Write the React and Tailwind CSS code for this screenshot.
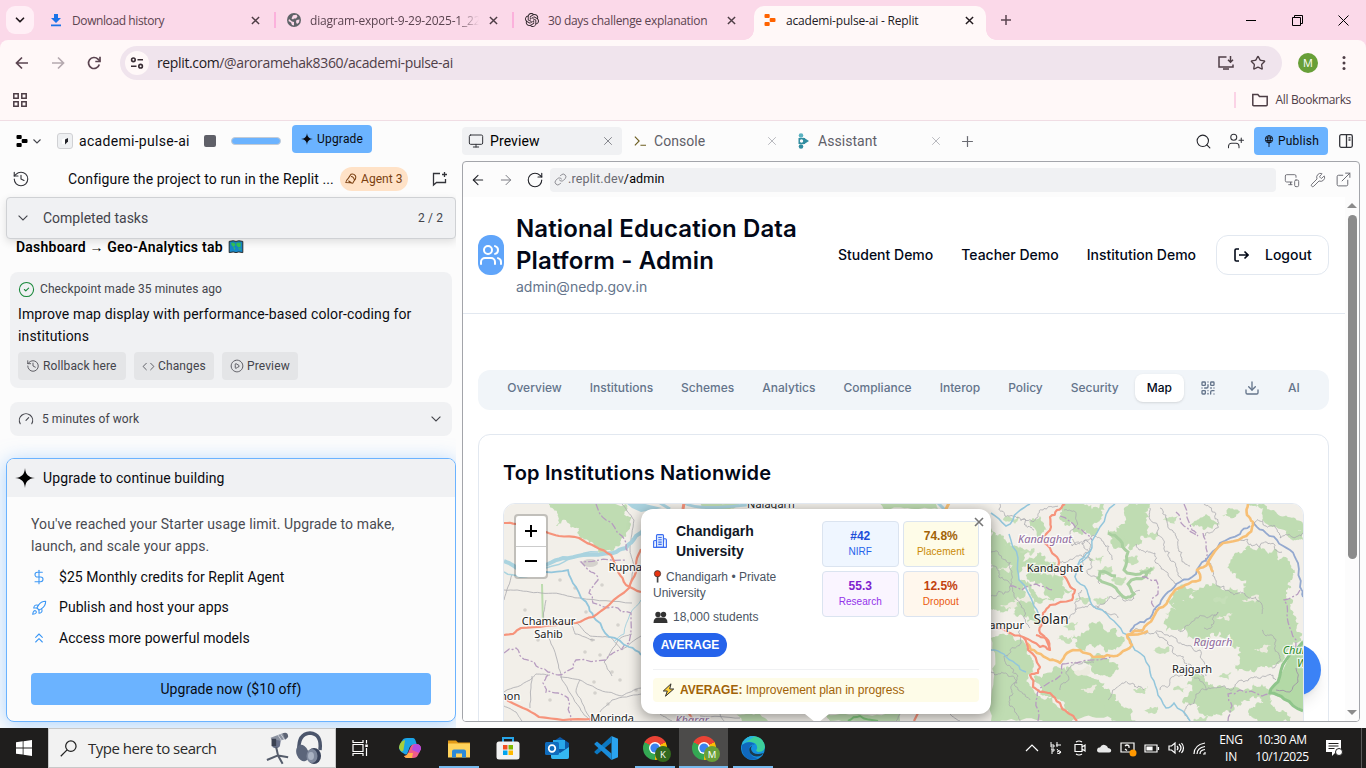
import React from "react";
import {
  ArrowLeft, ArrowRight, RotateCw, ChevronDown, History, Monitor, X, Plus, Search, UserPlus, Wrench,
  ExternalLink, Link, Users, QrCode, Download, DollarSign, Rocket, ChevronsUp,
  Code, CirclePlay, CircleCheck, Gauge, Star, MonitorSmartphone,
} from "lucide-react";
import { SiOpenai } from "react-icons/si";

/* ---------- map helpers ---------- */
function seeded(seed) {
  let s = seed * 9301 + 49297;
  return () => {
    s = (s * 1103515245 + 12345) % 2147483648;
    return s / 2147483648 - 0.5;
  };
}
function rough(pts, amp, depth, seed, close) {
  const rnd = seeded(seed);
  let p = close ? [...pts, pts[0]] : pts;
  for (let d = 0; d < depth; d++) {
    const next = [p[0]];
    for (let i = 1; i < p.length; i++) {
      const [ax, ay] = p[i - 1];
      const [bx, by] = p[i];
      const len = Math.hypot(bx - ax, by - ay) || 1;
      const off = rnd() * amp * Math.min(1, len / 9);
      next.push([(ax + bx) / 2 - ((by - ay) / len) * off, (ay + by) / 2 + ((bx - ax) / len) * off], p[i]);
    }
    p = next;
    amp *= 0.8;
  }
  return "M" + p.map(([x, y]) => x.toFixed(1) + " " + y.toFixed(1)).join("L") + (close ? "Z" : "");
}
const parse = (s) => s.split(" ").map((q) => q.split(",").map(Number));

const forests = [
  ["549,504 626,504 631,517 626,537 613,551 606,553 593,543 579,536 579,528 566,520 556,526 558,514", 9],
  ["991,528 1004,536 1016,546 1024,556 1018,575 1026,592 1036,608 1042,620 1028,616 1014,608 1004,612 991,606", 14],
  ["991,638 1010,634 1024,642 1034,664 1028,676 1036,694 1052,698 1072,721 991,721", 8],
  ["1022,560 1040,552 1056,562 1058,576 1072,590 1060,598 1044,586 1030,582", 12],
  ["1040,604 1030,596 1020,580 1034,590 1052,600", 8],
  ["1034,676 1060,668 1072,666 1088,676 1104,690 1118,706 1130,721 1070,721 1054,698 1040,692", 10],
  ["1062,512 1080,504 1104,504 1100,520 1092,536 1078,532 1070,522", 14],
  ["1040,516 1048,530 1040,540 1030,526", 8],
  ["1108,530 1122,526 1134,540 1120,548 1110,542", 10],
  ["1124,508 1150,504 1146,522 1140,538 1128,548 1120,530", 12],
  ["1074,634 1092,622 1116,628 1124,642 1112,650 1092,646 1078,648", 12],
  ["1084,660 1104,656 1118,664 1112,676 1098,674", 10],
  ["1098,684 1110,690 1124,708 1136,721 1112,721 1102,704", 10],
  ["1242,553 1260,547 1274,549 1290,564 1293,577 1286,590 1290,604 1296,630 1293,650 1277,664 1260,667 1234,664 1240,647 1230,634 1210,634 1206,644 1186,630 1164,624 1164,614 1176,610 1174,600 1194,597 1216,585 1240,597 1246,596 1240,580 1230,570", 14],
  ["1180,586 1196,590 1188,602 1172,606 1166,600", 8],
  ["1190,676 1204,678 1216,688 1250,690 1262,684 1276,692 1262,702 1244,700 1226,710 1206,716 1196,704 1184,704", 12],
  ["1190,524 1206,514 1220,524 1204,530", 8],
  ["1246,504 1264,508 1262,520 1290,530 1303,532 1303,524 1276,512 1260,504", 7],
  ["1228,508 1240,512 1234,518 1222,516", 6],
  ["1286,524 1303,530 1303,540 1290,538", 5],
  ["1256,704 1272,700 1280,712 1290,721 1258,721 1248,712", 10],
  ["700,503 745,503 730,509 706,509", 4],
  ["880,503 936,503 938,509 884,509", 4],
  ["826,714 900,714 900,721 830,721", 4],
  ["736,714 760,714 768,721 742,721", 3],
];
const redRoads = [
  ["504,523 516,524 546,532 559,536 579,538 596,547 611,555 618,572 626,585 641,592", 1.5],
  ["504,635 513,634 521,628 546,626 576,623 593,617 609,605 629,588 636,572 637,558 641,549", 1.5],
  ["504,698 523,708 539,717 563,720 593,719", 1],
  ["688,712 694,721", 0],
  ["914,721 918,713", 0],
  ["1065,504 1057,510 1050,517 1051,527 1043,538 1050,548 1057,557 1058,570 1068,582 1075,590 1072,600 1050,605 1043,613 1042,623 1040,633 1050,650 1040,647 1023,637 1007,632 992,625", 4],
  ["1036,635 1046,638 1050,650", 3],
  ["1023,637 1028,650 1040,667 1038,673 1030,675 1033,687 1040,692 1050,693 1060,703 1068,713 1077,721", 4],
];
const yellowRoads = [
  "1027,643 1037,653 1050,660 1060,663 1067,653 1080,650 1093,657 1107,655 1120,654 1132,645 1127,635 1143,630 1153,618 1163,607 1173,593 1185,585 1200,580 1197,570 1208,562 1223,543 1243,537 1252,528 1253,522 1247,515 1248,504",
  "1208,562 1213,572", "1127,635 1148,631",
];
const rivers = [
  ["1115,504 1100,527 1092,547 1080,560 1075,577 1087,590 1092,605 1110,618 1123,633 1132,645 1140,653 1150,672 1157,690 1166,708 1174,703 1190,721", 1.3],
  ["1130,632 1137,624 1150,618 1160,604 1168,592 1180,582 1196,574 1206,560 1220,543 1240,534 1250,526", 1.6],
  ["1253,522 1263,530 1277,540 1290,550 1298,563 1300,587 1303,597", 1.6],
  ["991,513 1006,526 1018,512 1030,504", 1.4],
  ["1009,534 1018,558 1019,580 1034,606 1043,620", 1.3],
  ["991,650 1004,654 1016,664 1026,672", 1.3],
  ["546,572 568,570 576,587 589,607 596,620 609,637 629,647 641,655", 1.6],
  ["1075,577 1084,560 1092,548", 1],
];
const borders = [
  "504,653 516,648 521,657 534,662 548,672 559,675 573,668 576,660 606,660 613,653 629,643 631,613 613,607 593,603 589,593 598,580 591,572 581,562 626,560",
  "548,675 543,683 546,692 558,693 568,698 571,721",
  "596,504 606,520 622,536 628,552",
  "1062,664 1080,662 1100,660 1112,655", "1038,721 1036,700 1040,688 1060,676 1062,664",
  "1010,586 1022,590 1036,584 1054,590", "1184,504 1192,530 1198,536 1184,526 1176,512",
  "1203,533 1206,548 1206,562", "1142,577 1156,580 1158,594 1152,600 1156,610",
  "1060,516 1076,528 1092,540", "1228,721 1232,706 1228,694 1240,690 1262,696 1276,688",
  "1300,590 1284,600 1288,622 1296,640 1296,668 1290,682",
];
const greyRoads = [
  "504,590 530,592 560,594 580,598 632,603", "546,632 556,656 562,680 580,708 590,721",
  "504,692 530,680 536,674 550,675", "560,677 580,680 600,690 622,696 641,688", "532,676 530,708", "504,706 516,712 522,721",
  "576,622 590,636 610,637 622,650 641,636", "612,676 604,662 618,640 632,634", "622,504 634,520 630,548 634,566 630,588",
  "569,621 575,634 595,640", "600,712 612,700 641,694", "546,600 543,626", "504,600 512,574", "580,680 576,692 592,721",
  "991,552 1006,560 1012,576 1008,592 991,596", "1000,504 1010,516 1026,520 1034,530", "991,566 1004,580 1020,604 1030,628",
  "1020,520 1036,518 1042,510 1058,506", "1060,540 1072,546 1086,540 1090,552 1080,570", "1060,562 1078,556 1090,560 1088,574 1100,584",
  "1020,630 1014,648 1004,656 1018,676 1010,700 1020,721", "1076,610 1090,604 1104,612 1118,618", "1150,508 1158,530 1164,548 1170,560 1184,580",
  "1160,508 1172,530 1178,548 1190,566", "1136,544 1150,552 1160,566 1176,584", "1208,562 1216,584 1230,592 1246,596 1262,604 1262,614",
  "1156,632 1166,640 1174,654 1184,660 1192,668 1204,676", "1130,630 1150,634 1176,638 1200,650 1206,676", "1178,630 1190,624 1204,616 1218,612 1214,622 1204,628",
  "1194,678 1206,690 1230,690 1244,682 1258,678 1276,680", "1160,690 1170,682 1178,676 1186,664", "1254,523 1270,526 1280,538 1303,533",
  "1108,700 1116,688 1130,684 1144,690", "1060,690 1066,672 1080,664 1094,662", "1082,590 1076,606 1062,618", "1092,605 1104,604 1118,596 1130,600 1140,590",
  "1204,504 1216,514 1214,530 1204,536", "1092,560 1084,548 1092,536 1104,544 1112,560", "1064,510 1076,516 1070,532 1080,544",
  "1030,700 1018,690 1008,676 991,672", "1190,721 1186,708 1196,694 1206,690", "1262,630 1276,640 1280,656 1272,668", "1240,540 1252,546 1266,542 1282,552",
  "660,714 672,721", "720,714 724,721", "900,714 896,721", "950,714 960,721", "700,716 740,718",
];

function MapLabel({ x, y, size = 11, children, kind }) {
  const tone = kind === "region" ? "fill-[#8f6a9c] italic" : kind === "park" ? "fill-[#2b8a2b] italic" : "fill-[#222]";
  return (
    <text x={x} y={y} fontSize={size} textAnchor="middle" stroke="#fff" strokeOpacity="0.75" strokeWidth="2.5" paintOrder="stroke"
      className={"font-['Noto_Sans',sans-serif] " + tone}>{children}</text>
  );
}

function MapCanvas() {
  return (
    <svg viewBox="504 504 799 258" className="block h-[258px] w-[799px]">
      <rect x="503" y="503" width="801" height="260" fill="#f2efe9" />
      {forests.map(([s, a], i) => (
        <path key={i} d={rough(parse(s), a, 4, i + 3, true)} fill="#bfdcb2" />
      ))}
      {[[1010, 520], [1026, 552], [1064, 640], [1100, 600], [1146, 570], [1160, 650], [1140, 690], [1220, 600], [1200, 720], [1180, 690], [1224, 676], [1118, 580], [1082, 600], [1150, 536], [1070, 626], [1096, 560], [1130, 560], [1104, 570], [1170, 520], [1150, 710]].map(([x, y], i) => (
        <path key={i} d={rough([[x - 7, y], [x, y - 3], [x + 8, y - 4], [x + 5, y + 4]], 7, 3, i + 60, true)} fill="#c5dfb8" />
      ))}
      {[[1004, 570], [1022, 600], [1008, 606], [1048, 575], [1088, 690], [1250, 600], [1224, 618], [1262, 650], [1082, 672]].map(([x, y], i) => (
        <path key={i} d={rough([[x - 8, y], [x, y - 2], [x + 9, y - 5], [x + 5, y + 3]], 7, 3, i + 90, true)} fill="#eceadf" />
      ))}
      {[[590, 563], [560, 580], [575, 588], [538, 640], [602, 585], [586, 612], [592, 640], [585, 652], [600, 655], [594, 682], [612, 672], [620, 680], [595, 693], [608, 704], [550, 700], [525, 610], [618, 625], [636, 690]].map(([x, y], i) => (
        <ellipse key={i} cx={x} cy={y} rx={i === 0 ? 8 : 1.8} ry={i === 0 ? 4 : 1.8} fill="#d5d2cd" />
      ))}
      <path d="M542 584L543 625" stroke="#bcdcae" strokeWidth="2" />
      {greyRoads.map((s, i) => (
        <path key={i} d={rough(parse(s), parse(s)[0][0] > 980 ? 8 : 2, parse(s)[0][0] > 980 ? 4 : 3, i + 20)} fill="none" stroke="#aaa9ae" strokeWidth="0.8" />
      ))}
      <path d={rough(parse("1108,533 1120,540 1128,552 1124,570 1140,574 1152,568 1146,576 1128,584 1134,594 1126,598 1116,588 1098,578 1100,572 1116,576"), 4, 2, 7)} fill="none" stroke="#a9cfa0" strokeWidth="3" />
      <path d="M626 503L641 503L662 508L641 512L632 508Z" fill="#aad3df" />
      <path d={rough(parse("504,561 514,566 526,573 548,564 563,558 583,555 613,553 626,548 636,536 643,530"), 2, 2, 5)} fill="none" stroke="#aad3df" strokeWidth="4" />
      <path d={rough(parse("504,572 520,577 546,568 570,558 598,552"), 4, 2, 8)} fill="none" stroke="#aad3df" strokeWidth="1.5" />
      <path d={rough(parse("641,600 630,614 624,634 614,642"), 2, 2, 8)} fill="none" stroke="#aad3df" strokeWidth="1" />
      <path d="M684 503Q700 512 760 503M660 503l10 6M938 503l8 8" fill="none" stroke="#aad3df" strokeWidth="3" />
      {borders.map((s, i) => (
        <path key={i} d={rough(parse(s), 4, 2, i + 40)} fill="none" stroke="#b79cc0" strokeWidth="1.3" strokeDasharray="7 2 2 2" />
      ))}
      {rivers.map(([s, w], i) => (
        <path key={i} d={rough(parse(s), 4, 2, i + 11)} fill="none" stroke={w === 1.6 && i !== 6 ? "#94a9cf" : "#93c6dc"} strokeWidth={w + 0.2} />
      ))}
      <path d="M1303 640L1290 655L1277 683L1270 693L1283 699L1303 710Z" fill="#b3d9a6" />
      <path d={rough(parse("1303,642 1286,660 1278,682 1270,693 1284,699 1303,711"), 3, 2, 8)} fill="none" stroke="#8fc58b" strokeWidth="3" />
      <path d={rough(parse("1296,668 1298,682 1290,692 1276,690"), 3, 2, 9)} fill="none" stroke="#a29aa8" strokeWidth="1" />
      <path d={rough(parse("848,721 860,716 878,721"), 3, 2, 9)} fill="none" stroke="#7fc47b" strokeWidth="2" />
      {yellowRoads.map((s, i) => (
        <path key={i} d={rough(parse(s), 4, 2, i + 31)} fill="none" stroke="#f7bf75" strokeWidth="2.6" strokeLinejoin="round" />
      ))}
      {redRoads.map(([s, a], i) => (
        <path key={i} d={rough(parse(s), a, 2, i + 51)} fill="none" stroke="#f6937b" strokeWidth="2.2" strokeLinejoin="round" />
      ))}
      <path d="M949 503l-4 8" stroke="#f7bf75" strokeWidth="3" />
      <path d="M684 503l-1 6" stroke="#f6937b" strokeWidth="3" />
      <MapLabel x={771} y={508}>Nalagarh</MapLabel>
      <MapLabel x={634} y={570.5}>Rupnagar</MapLabel>
      <MapLabel x={548.5} y={625}>Chamkaur</MapLabel>
      <MapLabel x={548.5} y={638}>Sahib</MapLabel>
      <MapLabel x={507} y={700}>anon</MapLabel>
      <MapLabel x={612} y={721.5}>Morinda</MapLabel>
      <MapLabel x={692} y={724} kind="region">Kharar</MapLabel>
      <MapLabel x={1045} y={542.5} kind="region">Kandaghat</MapLabel>
      <MapLabel x={1055} y={572}>Kandaghat</MapLabel>
      <MapLabel x={1051} y={623.5} size={13.5}>Solan</MapLabel>
      <MapLabel x={994} y={629}>Dharampur</MapLabel>
      <MapLabel x={1213} y={646} kind="region">Rajgarh</MapLabel>
      <MapLabel x={1192} y={673}>Rajgarh</MapLabel>
      <MapLabel x={1306} y={654} kind="park">Churdhar</MapLabel>
      <MapLabel x={1315} y={667} kind="park">Wildlife</MapLabel>
    </svg>
  );
}

/* ---------- small drawings ---------- */
function Close({ className }) {
  return <svg viewBox="0 0 10 10" className={"h-[9px] w-[9px] shrink-0 " + className}><path d="M1 1l8 8M9 1l-8 8" stroke="currentColor" strokeWidth="1.6" /></svg>;
}
function ReplitMark({ className }) {
  return (
    <svg viewBox="0 0 12 12" className={className} fill="currentColor">
      <rect x="0.5" y="0" width="5.2" height="4" rx="1" /><rect x="5.7" y="4" width="5.8" height="4" rx="1" /><rect x="0.5" y="8" width="5.2" height="4" rx="1" />
    </svg>
  );
}
function Chevron({ className }) {
  return <svg viewBox="0 0 10 6" className={"h-1.5 w-[10px] shrink-0 " + className} fill="none" stroke="currentColor" strokeWidth="1.1"><path d="M.6.6L5 5 9.400.6" /></svg>;
}
function Sparkle({ className }) {
  return <svg viewBox="0 0 20 20" className={className} fill="currentColor"><path d="M10 0C10.5 6.5 13.5 9.500 20 10C13.500 10.500 10.500 13.500 10 20C9.500 13.500 6.500 10.500 0 10C6.500 9.500 9.500 6.500 10 0Z" /></svg>;
}
function ChromeTab({ icon, label, className, closeClass, labelClass = "" }) {
  return (
    <div className={"flex h-full items-center " + className}>
      <div className="flex w-[22px] shrink-0 items-center">{icon}</div>
      <span className={"mt-0.5 min-w-0 flex-1 overflow-hidden whitespace-nowrap text-[12px] " + labelClass}>{label}</span>
      <Close className={closeClass} />
    </div>
  );
}

function TabStrip() {
  return (
    <div className="flex h-10 items-center bg-[#fbd9e9] font-['Open_Sans',sans-serif] text-[#5b4450]">
      <div className="flex w-10 shrink-0 pl-1.5">
        <div className="flex h-7 w-7 items-center justify-center rounded-[9px] bg-[#ffeff6]"><ChevronDown size={14} strokeWidth={3} className="text-[#221a1e]" /></div>
      </div>
      <ChromeTab className="w-[234px] pl-[10px] pr-[14px]" closeClass="text-[#4d3d45]" label="Download history" labelClass="tracking-[-0.4px]"
        icon={<svg viewBox="0 0 12 14" className="h-3.5 w-3" fill="#1a73e8"><path d="M4 1h4v4h3L6 10 1 5h3zM1 11.500h10v1.700H1z" /></svg>} />
      <div className="h-4 w-0.5 bg-[#fbb1dc]" />
      <ChromeTab className="w-[236px] pl-[11px] pr-[14px]" closeClass="text-[#4d3d45]" label="diagram-export-9-29-2025-1_22" labelClass="tracking-[-0.2px] mr-[10px] pl-px [mask-image:linear-gradient(90deg,#000_88%,transparent)]"
        icon={<svg viewBox="0 0 14 14" className="h-3.5 w-3.5"><circle cx="7" cy="7" r="7" fill="#5f6368" /><path d="M2 6l3 2.500 2 .5v3.500L5 12 4 9.500 1.500 8zM6 2.200l3.500-.5 1 1.800L9 5.500H7l-1 1-1.500-1zM9.500 7L12.500 6.500 12 9.500 10 11 9 9z" fill="#fbd9e9" /></svg>} />
      <div className="h-4 w-0.5 bg-[#fbb1dc]" />
      <ChromeTab className="w-[240px] pl-[11px] pr-[18px]" closeClass="text-[#4d3d45]" label="30 days challenge explanation" labelClass="tracking-[-0.3px] pl-px"
        icon={<SiOpenai size={14} className="text-[#2b2328]" />} />
      <div className="relative mt-1.5 h-[34px] w-[232px] rounded-t-[10px] bg-[#fff8f8]">
        <span className="absolute bottom-0 -left-[10px] h-[10px] w-[10px] bg-[radial-gradient(circle_at_0_0,#fbd9e9_9.500px,#fff8f8_10px)]" />
        <span className="absolute bottom-0 -right-[10px] h-[10px] w-[10px] bg-[radial-gradient(circle_at_100%_0,#fbd9e9_9.500px,#fff8f8_10px)]" />
        <ChromeTab className="pb-1.5 pl-[10px] pr-[12px] text-[#221a1e]" closeClass="text-[#221a1e]" label="academi-pulse-ai - Replit" labelClass="tracking-[-0.18px]"
          icon={<ReplitMark className="h-3 w-3 text-[#ff6200]" />} />
      </div>
      <div className="flex w-10 justify-center"><svg viewBox="0 0 10 10" className="h-[10px] w-[10px]"><path d="M5 0v10M0 5h10" stroke="#5b4450" strokeWidth="1.500" /></svg></div>
      <div className="ml-auto flex items-center text-black">
        <div className="flex w-[46px] justify-center"><div className="h-px w-[10px] bg-black" /></div>
        <div className="flex w-[46px] justify-center"><svg viewBox="0 0 11 11" className="h-[11px] w-[11px]" fill="none" stroke="#000"><path d="M.5 2.500h8v8h-8zM2.500 2.500v-2h8v8h-2" /></svg></div>
        <div className="flex w-[46px] justify-center"><svg viewBox="0 0 11 11" className="h-[11px] w-[11px]" stroke="#000"><path d="M.5.5l10 10M10.500.5l-10 10" /></svg></div>
      </div>
    </div>
  );
}

function BrowserBars() {
  return (
    <div className="bg-[#fbd9e9]">
      <div className="flex h-[81px] flex-col rounded-t-[8px] border-b border-[#f0dde4] bg-[#fff8f8] font-['Open_Sans',sans-serif] text-[#4f3e48]">
        <div className="flex h-[46px] items-center">
          <div className="flex w-[120px] shrink-0 items-center pl-[14px]">
            <svg viewBox="0 0 16 16" className="h-4 w-4" fill="none" stroke="#5b4450" strokeWidth="1.700"><path d="M14 8H3M8 2.500L2.500 8 8 13.500" /></svg>
            <svg viewBox="0 0 16 16" className="ml-5 h-4 w-4" fill="none" stroke="#b5a9af" strokeWidth="1.700"><path d="M2 8h11M8 2.500L13.500 8 8 13.500" /></svg>
            <svg viewBox="0 0 16 16" className="ml-5 h-4 w-4" fill="none" stroke="#5b4450" strokeWidth="1.700"><path d="M13.300 9.500A5.500 5.500 0 1 1 12 4.200L13.800 6" /><path d="M14 1.800v4.700H9.300" /></svg>
          </div>
          <div className="flex h-[34px] w-[1162px] items-center rounded-full bg-[#f0e4ed] pl-[5px]">
            <div className="flex h-6 w-6 items-center justify-center rounded-full bg-[#fff8f8]">
              <svg viewBox="0 0 14 14" className="h-3.5 w-3.5" fill="none" stroke="#382c33" strokeWidth="1.600"><circle cx="3.400" cy="3.800" r="1.800" /><path d="M7.500 3.800h5.500M1 10.200h5.500" /><circle cx="10.600" cy="10.200" r="1.800" /></svg>
            </div>
            <span className="mb-px ml-2 whitespace-nowrap text-[14px] tracking-[-0.365px]"><span className="text-[#221a1e]">replit.com</span>/@aroramehak8360/academi-pulse-ai</span>
            <svg viewBox="0 0 16 14" className="ml-auto h-3.5 w-4" fill="none" stroke="#4d3d45" strokeWidth="1.500"><path d="M8.500 1H1v10h14V8.500M5 13h6M12.500 0v6M10 3.800l2.500 2.500L15 3.800" /></svg>
            <Star size={16} strokeWidth={2} strokeLinejoin="miter" className="ml-4 mr-4 text-[#4d3d45]" />
          </div>
          <div className="ml-4 flex h-5 w-5 items-center justify-center rounded-full bg-[#689f38] text-[11px] text-white">M</div>
          <svg viewBox="0 0 4 16" className="ml-6 h-4 w-1" fill="#4d3d45"><circle cx="2" cy="2.500" r="1.500" /><circle cx="2" cy="8" r="1.500" /><circle cx="2" cy="13.500" r="1.500" /></svg>
        </div>
        <div className="flex h-7 items-center">
          <svg viewBox="0 0 14 14" className="ml-[13px] h-3.5 w-3.5" fill="none" stroke="#4d3d45" strokeWidth="1.500"><path d="M.8.8h4.400v4.400H.8zM8.800.8h4.400v4.400H8.800zM.8 8.800h4.400v4.400H.8zM8.800 8.800h4.400v4.400H8.800z" /></svg>
          <div className="ml-auto h-4 w-0.5 bg-[#fbd3e6]" />
          <svg viewBox="0 0 16 14" className="ml-4 h-3.5 w-4" fill="none" stroke="#4d3d45" strokeWidth="1.500"><path d="M.8 11.800V1.500h5l1.700 2h7.700v8.300q0 .9-.9.9H1.700q-.9 0-.9-.9z" /></svg>
          <span className="ml-2 mr-[15px] whitespace-nowrap text-[12px] tracking-[-0.35px]">All Bookmarks</span>
        </div>
      </div>
    </div>
  );
}

/* ---------- agent panel ---------- */
function SoftButton({ icon, children, className }) {
  return <div className={"flex h-7 items-center rounded bg-[#e4e5e7] pl-2 text-[12px] text-[#43444b] " + className}><span className="mr-[3px] flex">{icon}</span><span className="whitespace-nowrap tracking-[0.12px]">{children}</span></div>;
}
function Perk({ icon, children }) {
  return <div className="flex h-[30.500px] items-center"><div className="flex w-7 shrink-0 pl-0 text-[#3b97f5]">{icon}</div><span className="whitespace-nowrap tracking-[0.06px]">{children}</span></div>;
}
function AgentPanel() {
  return (
    <div className="flex h-full w-[456px] shrink-0 flex-col overflow-hidden text-[14px] text-[#0a0b10]">
      <div className="flex h-10 shrink-0 items-center pl-4">
        <ReplitMark className="h-3 w-3 text-black" />
        <div className="flex w-[29px] pl-[5px]"><svg viewBox="0 0 8 5" className="h-[5px] w-2" fill="none" stroke="#43444b" strokeWidth="1.100"><path d="M.5.5L4 4 7.500.5" /></svg></div>
        <div className="flex h-4 w-4 items-center justify-center rounded-[3px] border border-[#d0d1d4] bg-[#eef0f2]"><svg viewBox="0 0 6 8" className="h-2 w-1.5"><path d="M0 2.500L3 1v5.500L0 7z" fill="#fff" /><path d="M3 2.500L6 1v3.500L3 7.500z" fill="#23242a" /></svg></div>
        <span className="ml-1.5 w-[125px] whitespace-nowrap tracking-[0.3px]">academi-pulse-ai</span>
        <div className="h-3 w-3 rounded-[2px] bg-[#5f6068]" />
        <div className="ml-[15px] h-2 w-[50px] rounded-full border border-[#c3cbd5] bg-[#6bb3ff]" />
        <div className="mb-1 ml-[11px] flex h-7 w-20 items-center rounded bg-[#6bb3ff] pl-[9px] text-[12px]">
          <Sparkle className="mr-1 h-3 w-3" /><span className="tracking-[0.2px]">Upgrade</span>
        </div>
      </div>
      <div className="flex h-9 shrink-0 items-center pl-[12px] pr-2">
        <History size={18} strokeWidth={1.500} className="text-[#33343a]" />
        <span className="ml-[38px] w-[272px] whitespace-nowrap tracking-[0.1px]">Configure the project to run in the Replit ...</span>
        <div className="flex h-6 w-[68px] items-center rounded-full bg-[#ffe2c7] pl-[5px] text-[12px] text-[#7a3f10]">
          <svg viewBox="0 0 14 14" className="mr-1 h-3 w-3" fill="none" stroke="currentColor" strokeWidth="1.200"><path d="M7 1.500q3-1 5 1.500 1.500 3-1 5.500L9 12 6.500 11.500 1 11q0-2 3-5zM4 9l4 3M7 4q3 0 4 4" /></svg>
          <span className="whitespace-nowrap tracking-[0.05px]">Agent 3</span>
        </div>
        <svg viewBox="0 0 16 16" className="ml-auto h-4 w-4" fill="none" stroke="#33343a" strokeWidth="1.300"><path d="M8 2.500H1.500V14l3-2.500h9V8M12.500 1v5M10 3.500h5" /></svg>
      </div>
      <div className="z-10 ml-1.5 flex h-[42px] w-[450px] shrink-0 items-center rounded border border-[#cfd1d4] bg-[#f0f1f3] px-[11px] text-[#43444b] shadow-[0_3px_8px_rgba(0,0,0,0.12)]">
        <Chevron /><span className="ml-[15px] tracking-[0px]">Completed tasks</span><span className="ml-auto mr-[1px] text-[12px] tracking-[0.1px]">2 / 2</span>
      </div>
      <div className="flex h-[33px] shrink-0 items-start pl-4 text-[14px] font-semibold leading-[17px] text-black">
        <span className="mr-[5px] whitespace-nowrap tracking-[0.22px]">Dashboard → Geo-Analytics tab</span>
        <svg viewBox="0 0 16 15" className="mt-px h-[14px] w-4"><path d="M.7 1.500L5 .8l3 .7 3-.7 4.300.7v12L11 12.800l-3 .7-3-.7-4.300.7z" fill="#1688c8" stroke="#222" /><path d="M2.500 3h3.500l1.500 2-2 2.500-2-1.500zM8.500 3H13v4l-2 1-2.500-2zM5 8h2v3zM10 9h3v2z" fill="#34c554" /></svg>
      </div>
      <div className="ml-[10px] h-[116px] w-[442px] shrink-0 rounded-lg bg-[#f0f1f3] px-[8px] pt-[7px]">
        <div className="flex h-5 items-center text-[12px] text-[#43444b]"><CircleCheck size={17} strokeWidth={1.500} className="mr-[5px] text-[#18883a]" /><span className="whitespace-nowrap tracking-[0.1px]">Checkpoint made 35 minutes ago</span></div>
        <div className="mt-1 whitespace-nowrap leading-[22px] tracking-[0.12px]">Improve map display with performance-based color-coding for<br />institutions</div>
        <div className="mt-[5px] flex gap-2">
          <SoftButton className="w-[108px]" icon={<History size={14} strokeWidth={1.400} />}>Rollback here</SoftButton>
          <SoftButton className="w-20" icon={<Code size={13} strokeWidth={1.500} />}>Changes</SoftButton>
          <SoftButton className="w-[76px]" icon={<CirclePlay size={14} strokeWidth={1.500} strokeDasharray="3 1.500" />}>Preview</SoftButton>
        </div>
      </div>
      <div className="ml-[10px] mt-3.5 flex h-[34px] w-[442px] shrink-0 items-center rounded-lg bg-[#f0f1f3] pl-2 pr-[11px] text-[12px] text-[#43444b]">
        <Gauge size={16} strokeWidth={1.600} /><span className="ml-2 tracking-[0.07px]">5 minutes of work</span><Chevron className="ml-auto" />
      </div>
      <div className="ml-1.5 mt-[22px] flex h-[264px] w-[450px] shrink-0 flex-col overflow-hidden rounded-lg border border-[#6bb3ff] bg-[#fcfcfc] shadow-[0_3px_20px_rgba(107,179,255,0.55)]">
        <div className="flex h-[38px] shrink-0 items-center bg-[#f0f1f3] pl-2"><Sparkle className="mr-2 h-5 w-5 text-black" /><span className="tracking-[0.12px]">Upgrade to continue building</span></div>
        <div className="flex flex-1 flex-col px-6 pt-4">
          <div className="whitespace-nowrap leading-[22px] tracking-[0.1px] text-[#4a4b52]">You've reached your Starter usage limit. Upgrade to make,<br />launch, and scale your apps.</div>
          <div className="mt-[5px]">
            <Perk icon={<DollarSign size={16} strokeWidth={1.600} />}>$25 Monthly credits for Replit Agent</Perk>
            <Perk icon={<Rocket size={16} strokeWidth={1.600} />}>Publish and host your apps</Perk>
            <Perk icon={<ChevronsUp size={16} strokeWidth={1.600} />}>Access more powerful models</Perk>
          </div>
          <div className="mt-[19px] flex h-8 w-[400px] items-center justify-center rounded bg-[#6bb3ff] pt-px tracking-[0.05px]">Upgrade now ($10 off)</div>
        </div>
      </div>
    </div>
  );
}

/* ---------- admin page ---------- */
function PageTab({ children, active }) {
  return <div className={"flex h-7 items-center rounded-lg px-3 pb-px text-[12px] font-medium " + (active ? "bg-white text-[#020817] shadow-sm" : "text-[#64748b]")}>{children}</div>;
}
function Stat({ value, label, className, labelClass }) {
  return <div className={"flex h-[46px] flex-col items-center rounded border border-[#dbe4f0] pt-1.5 " + className}><div className="text-[12px] font-bold leading-4">{value}</div><div className={"text-[10px] leading-[15px] tracking-[0.05px] " + labelClass}>{label}</div></div>;
}
function Popup() {
  return (
    <div className="absolute left-[137px] top-[5px] h-[205px] w-[350px] rounded-xl bg-white px-3 pt-3 font-['Liberation_Sans',sans-serif] text-[12px] shadow-[0_3px_14px_rgba(0,0,0,0.4)]">
      <Close className="absolute right-[7px] top-2 h-[10px] w-[10px] text-[#757575]" />
      <div className="flex justify-between">
        <div className="w-[160px]">
          <div className="flex items-center">
            <svg viewBox="0 0 14 14" className="mr-[9px] h-3.5 w-3.5 shrink-0" fill="#dbeafe" stroke="#3b6cf0" strokeWidth="1.100"><path d="M.6 13.400V7.500q0-1 1-1H3.500M10.500 4.800h1.900q1 0 1 1v7.600" /><path d="M3.500 13.400V1.600q0-1 1-1h5q1 0 1 1v11.800z" /><path d="M.3 13.400h13.400M5.300 3.500h3.400M5.300 5.800h3.400M5.300 8.100h3.400M5.300 10.400h3.400" /></svg>
            <div className="text-[14px] font-bold leading-5 text-[#111827]">Chandigarh<br />University</div>
          </div>
          <div className="mt-2 whitespace-nowrap leading-4 text-[#4b5563]">
            <svg viewBox="0 0 9 14" className="mr-1 inline h-[13px] w-[9px] align-[-2px]"><path d="M3.700 6h1.800v7.500H3.700z" fill="#444" /><circle cx="4.500" cy="4" r="3.400" fill="#e8330f" stroke="#333" strokeWidth=".8" /></svg>
            Chandigarh • Private<br />University
          </div>
          <div className="mt-2 flex h-4 items-center text-[#4b5563]">
            <svg viewBox="0 0 15 12" className="mr-[5px] h-3 w-[15px]" fill="#333"><circle cx="5" cy="3.500" r="2.700" /><circle cx="10.500" cy="3.500" r="2.700" /><path d="M.5 12q0-5.500 4.500-5.500h5q4.500 0 4.500 5.500z" /></svg>
            18,000 students
          </div>
          <div className="mt-2 flex h-6 w-[74px] items-center justify-center rounded-full bg-[#2563eb] font-bold text-white">AVERAGE</div>
        </div>
        <div className="grid h-[96px] w-[157px] grid-cols-2 gap-1">
          <Stat value="#42" label="NIRF" className="bg-[#eff6ff] text-[#1d4ed8]" labelClass="text-[#2563eb]" />
          <Stat value="74.8%" label="Placement" className="bg-[#fefce8] text-[#a16207]" labelClass="text-[#ca8a04]" />
          <Stat value="55.3" label="Research" className="bg-[#faf5ff] text-[#7e22ce]" labelClass="text-[#9333ea]" />
          <Stat value="12.5%" label="Dropout" className="bg-[#fff7ed] text-[#c2410c]" labelClass="text-[#ea580c]" />
        </div>
      </div>
      <div className="mt-3 border-t border-[#f0f1f3] pt-2">
        <div className="flex h-6 items-center rounded bg-[#fefce8] pl-[9px] text-[#a16207]">
          <svg viewBox="0 0 12 14" className="mr-[5px] h-3.5 w-[13px]"><path d="M8.500.8L.8 8h4L3 13.200 11.200 6h-4z" fill="#ffd23b" stroke="#333" /></svg>
          <span className="whitespace-nowrap"><b>AVERAGE:</b> Improvement plan in progress</span>
        </div>
      </div>
      <svg viewBox="0 0 24 10" className="absolute left-[164px] top-[205px] h-[10px] w-6"><path d="M0 0h24L14 8q-2 2-4 0z" fill="#fff" /></svg>
    </div>
  );
}
function AdminPage() {
  return (
    <div className="h-full w-[882px] shrink-0 overflow-hidden bg-white font-['Inter',sans-serif] text-[#020817]">
      <div className="flex h-[117px] items-center border-b border-[#e2e8f0] pl-[15px] pr-4">
        <div className="flex h-10 w-[26px] items-center justify-center rounded-xl bg-[#60a5fa]"><Users size={24} className="shrink-0 text-white" /></div>
        <div className="ml-3 w-[322px] whitespace-nowrap"><div className="text-[24px] font-semibold leading-8 tracking-[0.13px]">National Education Data<br />Platform - Admin</div><div className="text-[14px] leading-5 text-[#64748b]">admin@nedp.gov.in</div></div>
        <div className="flex items-center gap-7 whitespace-nowrap pb-0.5 text-[14px] font-medium"><span>Student Demo</span><span>Teacher Demo</span><span>Institution Demo</span></div>
        <div className="ml-auto flex h-10 w-[113px] items-center rounded-xl border border-[#e2e8f0] pl-4 text-[14px] font-medium">
          <svg viewBox="0 0 16 16" className="mr-4 h-4 w-4" fill="none" stroke="currentColor" strokeWidth="1.600"><path d="M6 2H3.200Q2 2 2 3.200v9.600Q2 14 3.200 14H6M6 8h9M11.500 4.500L15 8l-3.500 3.500" /></svg><span className="pb-0.5">Logout</span>
        </div>
      </div>
      <div className="mx-[15px] mt-[56px] flex h-10 w-[851px] items-start justify-center gap-1 rounded-xl bg-[#f1f5f9] pt-1">
        <PageTab>Overview</PageTab><PageTab>Institutions</PageTab><PageTab>Schemes</PageTab><PageTab>Analytics</PageTab><PageTab>Compliance</PageTab><PageTab>Interop</PageTab><PageTab>Policy</PageTab><PageTab>Security</PageTab><PageTab active>Map</PageTab>
        <PageTab><QrCode size={16} /></PageTab><PageTab><Download size={16} /></PageTab><PageTab>AI</PageTab>
      </div>
      <div className="relative mx-[15px] mt-6 h-[400px] w-[851px] rounded-xl border border-[#e2e8f0] px-6 pt-6">
        <div className="h-[44px] text-[20px] font-semibold leading-7 tracking-[0.15px]">Top Institutions Nationwide</div>
        <div className="absolute left-[790px] top-[209px] h-[52px] w-[52px] rounded-full bg-[#3b82f6] shadow-lg" />
        <div className="relative h-[260px] w-[801px] overflow-hidden rounded-xl border border-[#e2e8f0]">
          <MapCanvas />
          <div className="absolute left-[10px] top-[10px] flex w-[34px] flex-col rounded border-2 border-black/20 bg-clip-padding">
            <div className="flex h-[31px] items-center justify-center rounded-t-sm border-b border-[#ccc] bg-white"><svg viewBox="0 0 12 12" className="h-3 w-3"><path d="M6 0v12M0 6h12" stroke="#000" strokeWidth="2" /></svg></div>
            <div className="flex h-[30px] items-center justify-center rounded-b-sm bg-white"><div className="mb-0.5 h-0.5 w-3 bg-black" /></div>
          </div>
          <Popup />
        </div>
      </div>
    </div>
  );
}

/* ---------- preview pane ---------- */
function PreviewPane() {
  return (
    <div className="ml-1.5 flex w-[899px] flex-col text-[14px]">
      <div className="flex h-10 shrink-0 items-center">
        <div className="flex h-7 w-40 items-center rounded bg-[#f0f1f3] pl-1.5 pr-[7px] text-black"><Monitor size={16} strokeWidth={1.500} className="mr-1.5 text-[#33343a]" /><span className="tracking-[0.1px]">Preview</span><X size={14} strokeWidth={1.500} className="ml-auto text-[#77787f]" /></div>
        <div className="flex w-[164px] items-center pl-3 pr-[7px] text-[#5f6068]"><svg viewBox="0 0 14 12" className="mr-2 h-3 w-3" fill="none" stroke="#6b5c1e" strokeWidth="1.300"><path d="M1 1l5 5-5 5M7.500 11H14" /></svg><span className="tracking-[0.05px]">Console</span><X size={14} strokeWidth={1.300} className="ml-auto text-[#a3a4aa]" /></div>
        <div className="flex w-[164px] items-center pl-3 pr-[7px] text-[#5f6068]">
          <svg viewBox="0 0 11 16" className="mr-2 h-4 w-3" fill="#318da0"><circle cx="2.500" cy="2.500" r="2.300" fill="#5ab2c1" /><path d="M0 5h6.500v6H0z" /><path d="M5 4.500L10.500 8 5 11.500z" /><circle cx="2.500" cy="13.500" r="2.300" /><circle cx="3" cy="8" r="1.700" fill="#fcfcfc" /></svg>
          <span className="tracking-[0.05px]">Assistant</span><X size={14} strokeWidth={1.300} className="ml-auto text-[#a3a4aa]" /></div>
        <Plus size={17} strokeWidth={1.700} className="ml-[9px] text-[#6a6b72]" />
        <Search size={17} strokeWidth={1.500} className="ml-auto text-[#23242a]" />
        <UserPlus size={18} strokeWidth={1.400} className="ml-[15px] text-[#33343a]" />
        <div className="ml-[9px] flex h-7 w-[74px] items-center rounded bg-[#6bb3ff] pl-[10px] text-[12px] text-[#0a0b10]">
          <svg viewBox="0 0 10 14" className="mr-1 h-3 w-[10px]" fill="none" stroke="currentColor"><circle cx="5" cy="5" r="4.300" /><ellipse cx="5" cy="5" rx="1.800" ry="4.300" /><path d="M1 3.500h8M1 6.500h8M5 5v9" /></svg><span className="tracking-[0.2px]">Publish</span>
        </div>
        <svg viewBox="0 0 14 14" className="ml-[11px] mr-2 h-3.5 w-3.5" fill="none" stroke="#33343a" strokeWidth="1.300"><rect x=".7" y=".7" width="12.600" height="12.600" rx="1.500" /><path d="M7.500 1v12M9.500 3.800h2M9.500 6h2" /></svg>
      </div>
      <div className="flex h-[561px] w-[898px] flex-col overflow-hidden rounded border border-[#a3a5aa] bg-[#fcfcfc]">
        <div className="flex h-[35px] shrink-0 items-center pl-[7px]">
          <ArrowLeft size={16} strokeWidth={1.600} className="text-[#23242a]" />
          <ArrowRight size={16} strokeWidth={1.500} className="ml-3 text-[#7a7b82]" />
          <RotateCw size={18} strokeWidth={1.500} className="ml-3 text-[#23242a]" />
          <div className="ml-1.5 flex h-6 w-[726px] items-center rounded bg-[#f0f1f3] pl-1 text-[12.500px]"><Link size={13} strokeWidth={1.500} className="mr-px text-[#77787f]" /><span className="mb-px tracking-[0.150px] text-[#6a6b72]">.replit.dev<span className="text-black">/admin</span></span></div>
          <MonitorSmartphone size={16} strokeWidth={1.400} className="ml-2 text-[#6a6b72]" />
          <Wrench size={16} strokeWidth={1.400} className="ml-[10px] text-[#6a6b72]" />
          <ExternalLink size={17} strokeWidth={1.400} className="ml-[9px] text-[#6a6b72]" />
        </div>
        <div className="flex h-[524px]">
          <AdminPage />
          <div className="flex w-3.5 flex-col items-center justify-between bg-[#fcfcfc] pb-1.5 pt-1.5">
            <svg viewBox="0 0 10 5" className="h-[5px] w-[10px]" fill="#8b8b8b"><path d="M5 0l5 5H0z" /></svg>
            <div className="-mt-[144px] h-[344px] w-[9px] rounded-full bg-[#8b8b8b]" />
            <svg viewBox="0 0 10 5" className="h-[5px] w-[10px]" fill="#8b8b8b"><path d="M5 5l5-5H0z" /></svg>
          </div>
        </div>
      </div>
    </div>
  );
}

/* ---------- taskbar ---------- */
function Slot({ children, running, active }) {
  return <div className={"relative flex h-10 w-[49px] items-center justify-center " + (active ? "bg-[#4c4b4a]" : "")}>{children}{running && <span className={"absolute bottom-0 h-0.5 bg-[#76b9ed] " + (active ? "w-full" : "w-10")} />}</div>;
}
function Chrome({ letter, color }) {
  return (
    <div className="flex h-6 w-6 items-end justify-end rounded-full bg-[conic-gradient(from_300deg,#ea4335_0_120deg,#fbbc04_120deg_240deg,#34a853_240deg_360deg)]">
      <svg viewBox="0 0 24 24" className="-mr-3 h-6 w-6 shrink-0"><circle cx="12" cy="12" r="6" fill="#fff" /><circle cx="12" cy="12" r="4.600" fill="#3b82f0" /></svg>
      <svg viewBox="0 0 16 16" className="-mb-0.5 -mr-1 h-4 w-4 shrink-0"><circle cx="8" cy="8" r="8" fill={color} /><text x="8" y="11.500" fontSize="9.500" textAnchor="middle" fill="#fff" className="font-['Open_Sans',sans-serif]">{letter}</text></svg>
    </div>
  );
}
function Taskbar() {
  return (
    <div className="flex h-10 items-center overflow-hidden bg-[#1f1e1d] font-['Open_Sans',sans-serif] text-white">
      <div className="flex w-12 justify-center"><svg viewBox="0 0 16 16" className="h-4 w-4" fill="#fff"><path d="M0 2.200L6.700 1.300v6.200H0zM7.500 1.200L16 0v7.500H7.500zM0 8.400h6.700v6.200L0 13.700zM7.500 8.400H16V16l-8.500-1.200z" /></svg></div>
      <div className="flex h-10 w-[288px] items-center border border-[#c8c8c8] bg-[#f2f2f2] pl-[11px] text-[#2b2b2b]">
        <svg viewBox="0 0 18 18" className="h-[17px] w-[17px]" fill="none" stroke="#222" strokeWidth="1.300"><circle cx="11.500" cy="6.500" r="5.500" /><path d="M7.500 10.500L.8 17.200" /></svg>
        <span className="ml-[11px] whitespace-nowrap text-[15px] tracking-[-0.5px]">Type here to search</span>
        <svg viewBox="0 0 26 36" className="ml-auto h-9 w-6"><path d="M5 7L18 2l4 6L8 12z" fill="#8b92a0" /><path d="M18 2q6-2 6 4l-3 3z" fill="#5d6474" /><path d="M7 9v8q5 3 8-1l1-6" fill="#68708a" /><path d="M6 8h5v8H6z" fill="#3b4152" /><path d="M11 17l2 9M13 26L1 31M13 26l11 2M13 26l5 9" fill="none" stroke="#555c6b" strokeWidth="2.200" /><path d="M13 4l4 6M16 3l4 6" stroke="#d2d5dc" /></svg>
        <svg viewBox="0 0 28 34" className="ml-[5px] mr-3 h-[34px] w-7"><path d="M4 19Q3 3 15 2q12 1 10 17" fill="none" stroke="#4b556b" strokeWidth="3.500" /><ellipse cx="7.500" cy="22" rx="6" ry="8.500" fill="#5b657a" transform="rotate(-20 7.500 22)" /><ellipse cx="19" cy="25" rx="7" ry="8" fill="#39435a" /><ellipse cx="17" cy="25" rx="5.500" ry="7" fill="#7e889c" /><ellipse cx="16" cy="25" rx="3" ry="4" fill="#a9b2c2" /></svg>
      </div>
      <Slot><svg viewBox="0 0 16 16" className="mr-0.5 h-4 w-4" fill="none" stroke="#fff" strokeWidth="1.200"><path d="M1 0v2.500h10V0M1 16v-2.500h10V16M1 4.500h10v7H1zM14.500 0v3.500M14.500 8v8" /><path d="M13.300 4.500h2.500v2.500h-2.500z" fill="#fff" stroke="none" /></svg></Slot>
      <Slot><svg viewBox="0 0 22 20" className="h-5 w-[22px]"><path d="M8 0h6q2 0 3 4l1 3h-4q-3 0-4 4l-1.500 4Q8 18 4 15 0 13 0 9L3 3Q4 0 8 0z" fill="#1ba4e6" /><path d="M0 10q0-6 6-8L4.500 12Q3 16 0 10z" fill="#a8cf3b" /><path d="M14 20H8q-2 0-3-2 3 0 4-3l2.500-6Q12.500 6 17 6q5 0 5 5l-3 6q-1 3-5 3z" fill="#ee5b8a" /><path d="M17 6q5 0 5 5l-2 4-7-3 1-4q1-2 3-2z" fill="#b44be0" /><path d="M8 20q-2 0-3-2 3 0 4-3h5l-1 5z" fill="#ffb04a" /></svg></Slot>
      <Slot running><svg viewBox="0 0 22 18" className="h-[19px] w-[22px]"><path d="M0 1h8l2 2h12v5H0z" fill="#e39b18" /><path d="M0 4h22v14H0z" fill="#ffd35c" /><path d="M4 18v-6q0-2 2-2h10q2 0 2 2v6h-4v-4H8v4z" fill="#2b8ad8" /></svg></Slot>
      <Slot><svg viewBox="0 0 24 24" className="h-6 w-6"><path d="M7 6V2h10v4" fill="none" stroke="#27a5e8" strokeWidth="2" /><rect x=".5" y="5.500" width="23" height="18" rx="2.500" fill="#f2f2f2" /><path d="M7 9h4.500v4.500H7z" fill="#f25022" /><path d="M12.500 9H17v4.500h-4.500z" fill="#7fba00" /><path d="M7 14.500h4.500V19H7z" fill="#00a4ef" /><path d="M12.500 14.500H17V19h-4.500z" fill="#ffb900" /></svg></Slot>
      <Slot><svg viewBox="0 0 24 24" className="h-6 w-6"><path d="M6 7L15 1l9 6v14q0 2-2 2H8q-2 0-2-2z" fill="#0c59a4" /><path d="M8 4h12v9H8z" fill="#28a8ea" /><path d="M6 21V12l9 5 9-6v10q0 2-2 2H8q-2 0-2-2z" fill="#35b8f1" /><rect y="6" width="14" height="13" rx="1.500" fill="#0f6cbd" /><circle cx="7" cy="12.500" r="3.300" fill="none" stroke="#fff" strokeWidth="1.700" /></svg></Slot>
      <Slot><svg viewBox="0 0 24 24" className="h-6 w-6"><path d="M17.500 0L24 2.800v18.400L17.500 24z" fill="#2aa4f0" /><path d="M17.500 0v6.500L3 18.500.5 16.500v-1z" fill="#0b78c2" /><path d="M17.500 24v-6.500L3 5.500.5 7.500v1z" fill="#1a8ddb" /></svg></Slot>
      <Slot running><Chrome letter="K" color="#33691e" /></Slot>
      <Slot running active><Chrome letter="M" color="#689f38" /></Slot>
      <Slot running><svg viewBox="0 0 24 24" className="h-6 w-6"><circle cx="12" cy="12" r="12" fill="#1490df" /><path d="M2 6Q6 0 12 0q11 1 12 11-1 5-7 5-3-1-1-3 1-6-6-7Q5 5 1 9z" fill="#3ccf9a" /><path d="M2 6Q7-1 14 .3 8 4 1 9z" fill="#28b4e0" /><path d="M1 9q6-5 13-1-6 0-6 6 1 7 9 8-5 3-10 1Q0 19 1 9z" fill="#1068bd" /><path d="M14 8q-4 1-4 5 1 5 7 5 3 0 5-1l-1 2q-7 4-12-2-3-6 5-9z" fill="#1f1e1d" fillOpacity=".75" /></svg></Slot>
      <div className="ml-auto flex items-center">
        {[
          <path key="a" d="M2 11l6-6 6 6" />,
          <g key="b" strokeWidth="1"><path d="M3 2v5h3V5H3M9 2v5M8 5h5M9 9l3 4M4 9v5M3 9h3v2H4M9 12q2-3 4 0-1 3-4 1" /></g>,
          <g key="c"><path d="M3 4.500h7v7H3zM10 7l3-2v6l-3-2M4 2q3-2 6 0M4 14q3 2 6 0" /></g>,
          <path key="d" d="M3 12.500q-3-1-1.500-4 1-1.500 2.500-1 2-4 6-2 1.500.5 2 2.500 4 .5 3 3.500-.5 1-2 1z" fill="#e8e8e8" stroke="none" />,
          <g key="e"><path d="M1 3h13v9H1zM5 9l2 1.500M5 6q2-2 4 0v2" /><circle cx="13" cy="13" r="3.500" fill="#ff9800" stroke="none" /></g>,
          <g key="f"><path d="M1 5h12v7H1zM14.500 7v3" /><path d="M3 7h5v3H3z" fill="#fff" /></g>,
          <g key="g"><path d="M1 6h2.500L7 3v10L3.500 10H1zM9 6q2 2 0 4M11 4q4 4 0 8M13.500 3q4 5 0 10" /></g>,
          <g key="h"><path d="M2 14Q2 5 13 3M5 14Q5 8 13 6.500M8 14q0-4 5-4.500" /><path d="M11 14h2v-2" /></g>,
        ].map((g, i) => (
          <div key={i} className="flex w-6 justify-center"><svg viewBox="0 0 16 16" className="h-4 w-4 overflow-visible" fill="none" stroke="#fff" strokeWidth="1.200">{g}</svg></div>
        ))}
        <div className="ml-[3px] w-8 text-center text-[12px] leading-[17px] tracking-[-0.3px]">ENG<br />IN</div>
        <div className="ml-1 w-[62px] whitespace-nowrap text-center text-[12px] leading-[17px] tracking-[-0.35px]">10:30 AM<br />10/1/2025</div>
        <svg viewBox="0 0 18 18" className="ml-3 mr-[18px] h-[18px] w-[18px]"><path d="M1 1h15v12h-5l-4 4v-4H1z" fill="#fff" /><path d="M3.500 4.500h10M3.500 7h10M3.500 9.500h6" stroke="#1f1e1d" /><circle cx="14" cy="13" r="3.500" fill="#fff" stroke="#1f1e1d" /></svg>
        <div className="mr-1 h-10 w-px bg-[#5a5a5a]" />
      </div>
    </div>
  );
}

export default function App() {
  return (
    <div className="flex h-[768px] w-[1366px] flex-col overflow-hidden bg-[#fcfcfc]">
      <TabStrip />
      <BrowserBars />
      <div className="flex h-[607px] shrink-0 font-['Roboto',sans-serif]"><AgentPanel /><PreviewPane /></div>
      <Taskbar />
    </div>
  );
}
